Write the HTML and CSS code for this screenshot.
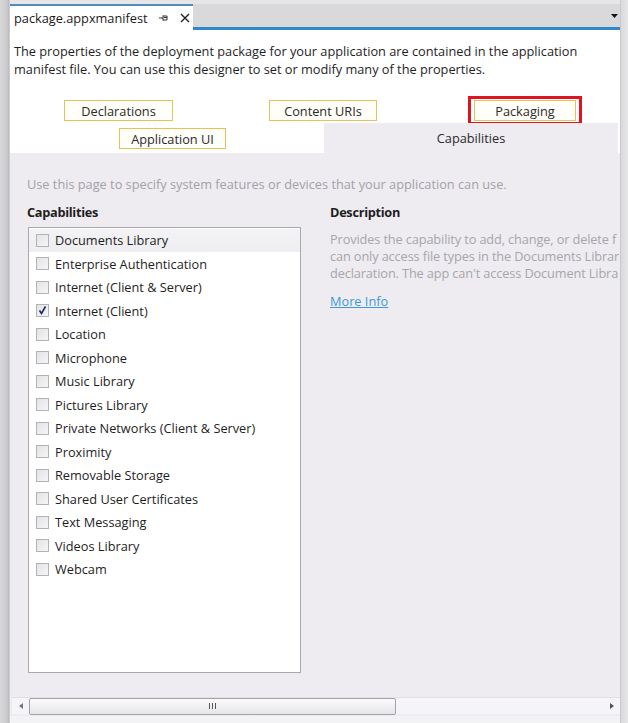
FILE: index.html
```html
<!DOCTYPE html>
<html>
<head>
<meta charset="utf-8">
<link rel="stylesheet" href="styles.css">
</head>
<body>
<div class="frame">
  <div class="edge-left"></div>
  <div class="main">
    <div class="topgap"></div>
    <div class="tabstrip">
      <div class="doctab">
        <span class="doctab-title">package.appxmanifest</span>
        <svg class="pin" width="10" height="8" viewBox="0 0 10 8"><path d="M0 4H4M4 1.5V6.5M4 2H8V6H4M5 3.5H8" fill="none" stroke="#333" stroke-width="1"/></svg>
        <svg class="close" width="10" height="10" viewBox="0 0 10 10"><path d="M1 1L9 9M9 1L1 9" stroke="#222" stroke-width="1.4"/></svg>
      </div>
      <div class="strip-rest">
        <svg class="dropdown" width="7" height="4" viewBox="0 0 7 4"><path d="M0 0H7L3.5 4Z" fill="#111"/></svg>
      </div>
    </div>
    <div class="intro">The properties of the deployment package for your application are contained in the application<br>manifest file. You can use this designer to set or modify many of the properties.</div>
    <div class="tabrow tabrow-1">
      <div class="ptab ptab-decl">Declarations</div>
      <div class="ptab ptab-uri">Content URIs</div>
      <div class="highlight"><div class="ptab ptab-pack">Packaging</div></div>
    </div>
    <div class="tabrow tabrow-2">
      <div class="ptab ptab-app">Application UI</div>
      <div class="seltab">Capabilities</div>
    </div>
    <div class="panel">
      <div class="hint">Use this page to specify system features or devices that your application can use.</div>
      <div class="cols">
        <div class="col-left">
          <div class="heading">Capabilities</div>
          <div class="listbox">
            <div class="item item-first"><span class="cb"></span>Documents Library</div>
            <div class="item"><span class="cb"></span>Enterprise Authentication</div>
            <div class="item"><span class="cb"></span>Internet (Client &amp; Server)</div>
            <div class="item"><span class="cb checked"><svg width="11" height="11" viewBox="0 0 11 11"><path d="M2.5 5.5L4.5 8.5L8.5 1.5" fill="none" stroke="#1c2a66" stroke-width="1.6"/></svg></span>Internet (Client)</div>
            <div class="item"><span class="cb"></span>Location</div>
            <div class="item"><span class="cb"></span>Microphone</div>
            <div class="item"><span class="cb"></span>Music Library</div>
            <div class="item"><span class="cb"></span>Pictures Library</div>
            <div class="item"><span class="cb"></span>Private Networks (Client &amp; Server)</div>
            <div class="item"><span class="cb"></span>Proximity</div>
            <div class="item"><span class="cb"></span>Removable Storage</div>
            <div class="item"><span class="cb"></span>Shared User Certificates</div>
            <div class="item"><span class="cb"></span>Text Messaging</div>
            <div class="item"><span class="cb"></span>Videos Library</div>
            <div class="item"><span class="cb"></span>Webcam</div>
          </div>
        </div>
        <div class="col-right">
          <div class="heading">Description</div>
          <div class="desc">Provides the capability to add, change, or delete f<br>can only access file types in the Documents Librar<br>declaration. The app can't access Document Libra</div>
          <a class="more" href="#">More Info</a>
        </div>
      </div>
      <div class="hscroll">
        <span class="arrow arrow-left"></span>
        <div class="thumb"><span class="grip"></span></div>
        <div class="track-rest"></div>
        <span class="arrow arrow-right"></span>
      </div>
    </div>
    <div class="bottomgap"></div>
  </div>
  <div class="edge-right"></div>
</div>
</body>
</html>
```

FILE: styles.css
```css
* { box-sizing: border-box; }
html, body { margin: 0; padding: 0; }
body {
  width: 628px;
  height: 723px;
  overflow: hidden;
  font-family: "Open Sans", "Noto Sans", sans-serif;
  font-size: 12.75px;
  color: #1e1e1e;
  background: #e9e9ea;
}
.frame { display: flex; height: 723px; }
.edge-left {
  width: 10px;
  background: linear-gradient(to right, #d7d7d9 0, #cacacc 7px, #b9b9bb 9px, #e2e2e4 10px);
}
.edge-right {
  width: 8px;
  background: linear-gradient(to right, #b8b8ba 0, #dadadc 1px, #e6e6e8 8px);
}
.main { flex: 1; display: flex; flex-direction: column; min-width: 0; }
.topgap { height: 4px; background: #e6e6e8; }
.tabstrip { height: 26px; display: flex; }
.doctab {
  width: 183px;
  background: #fff;
  border-top: 2px solid #4f8cbd;
  display: flex;
  align-items: center;
  padding-left: 4px;
}
.doctab-title { color: #1a1a1a; }
.pin { margin-left: 11px; }
.close { margin-left: 11px; }
.strip-rest {
  flex: 1;
  background: #d9d9db;
  border-bottom: 3px solid #2f88c9;
  display: flex;
  align-items: center;
  justify-content: flex-end;
  padding-right: 2px;
}
.dropdown { margin-top: 1px; }
.intro {
  background: #fff;
  padding: 12px 4px 16px;
  line-height: 18px;
  white-space: nowrap;
  overflow: hidden;
}
.tabrow { background: #fff; display: flex; align-items: flex-start; }
.tabrow-1 { height: 29px; }
.tabrow-2 { height: 30px; }
.ptab {
  height: 21px;
  border: 1px solid #e4c35c;
  background: #fffef8;
  display: flex;
  align-items: center;
  justify-content: center;
  color: #2a2a2a;
  white-space: nowrap;
}
.ptab-decl { width: 109px; margin-left: 54px; margin-top: 6px; }
.ptab-uri { width: 108px; margin-left: 96px; margin-top: 6px; }
.highlight {
  margin-left: 91px;
  margin-top: 2px;
  width: 114px;
  height: 29px;
  border: 3px solid #e0141e;
  padding: 1px 3px;
}
.ptab-pack { width: 102px; height: 21px; }
.ptab-app { width: 107px; margin-left: 109px; margin-top: 5px; }
.seltab {
  margin-left: 98px;
  width: 294px;
  height: 30px;
  background: #eeecf1;
  display: flex;
  align-items: center;
  justify-content: center;
  color: #2a2a2a;
}
.panel {
  flex: 1;
  background: #eeecf1;
  padding: 22px 0 0 0;
  display: flex;
  flex-direction: column;
  min-height: 0;
}
.hint { color: #a2a2a6; line-height: 18px; padding-left: 17px; white-space: nowrap; }
.cols { display: flex; margin-top: 10px; flex: 1; min-height: 0; }
.col-left { width: 320px; padding-left: 18px; flex-shrink: 0; }
.col-right { flex: 1; min-width: 0; }
.heading { font-weight: 700; line-height: 18px; color: #1e1e1e; letter-spacing: -0.3px; }
.col-left .heading { margin-left: -1px; }
.listbox {
  margin-top: 6px;
  width: 273px;
  height: 446px;
  background: #fff;
  border: 1px solid #a9a9ad;
  padding-top: 0.5px;
}
.item {
  height: 23.5px;
  display: flex;
  align-items: center;
  padding-left: 7px;
  white-space: nowrap;
  color: #1e1e1e;
}
.item-first { background: linear-gradient(to bottom, #f3f3f5, #eeeef0); }
.cb {
  width: 13px;
  height: 13px;
  border: 1px solid #b3b3b6;
  background: linear-gradient(135deg, #e3e3e6, #f6f6f7);
  margin-right: 6px;
  flex-shrink: 0;
  display: flex;
  align-items: center;
  justify-content: center;
}
.cb svg { display: block; }
.desc {
  margin-top: 10px;
  color: #a6a6aa;
  line-height: 17px;
  white-space: nowrap;
  letter-spacing: -0.12px;
}
.more {
  display: inline-block;
  margin-top: 10px;
  color: #3d9ad6;
  text-decoration: underline;
  line-height: 18px;
}
.hscroll {
  height: 17px;
  margin: 0 0 2px 2px;
  display: flex;
  align-items: center;
  background: #f5f4f8;
  border-top: 1px solid #e2e0e6;
}
.arrow { width: 17px; display: flex; justify-content: center; }
.arrow-left::before {
  content: "";
  border-right: 4px solid #777;
  border-top: 3px solid transparent;
  border-bottom: 3px solid transparent;
}
.arrow-right::before {
  content: "";
  border-left: 4px solid #555;
  border-top: 3px solid transparent;
  border-bottom: 3px solid transparent;
}
.thumb {
  width: 367px;
  height: 17px;
  border: 1px solid #a4a4a8;
  border-radius: 2px;
  background: linear-gradient(to bottom, #fbfbfc, #e6e6e9);
  display: flex;
  align-items: center;
  justify-content: center;
}
.grip {
  width: 7px;
  height: 6px;
  background: repeating-linear-gradient(to right, #555 0, #555 1px, transparent 1px, transparent 3px);
}
.track-rest { flex: 1; }
.bottomgap { height: 7px; background: #f3f3f5; }
```
